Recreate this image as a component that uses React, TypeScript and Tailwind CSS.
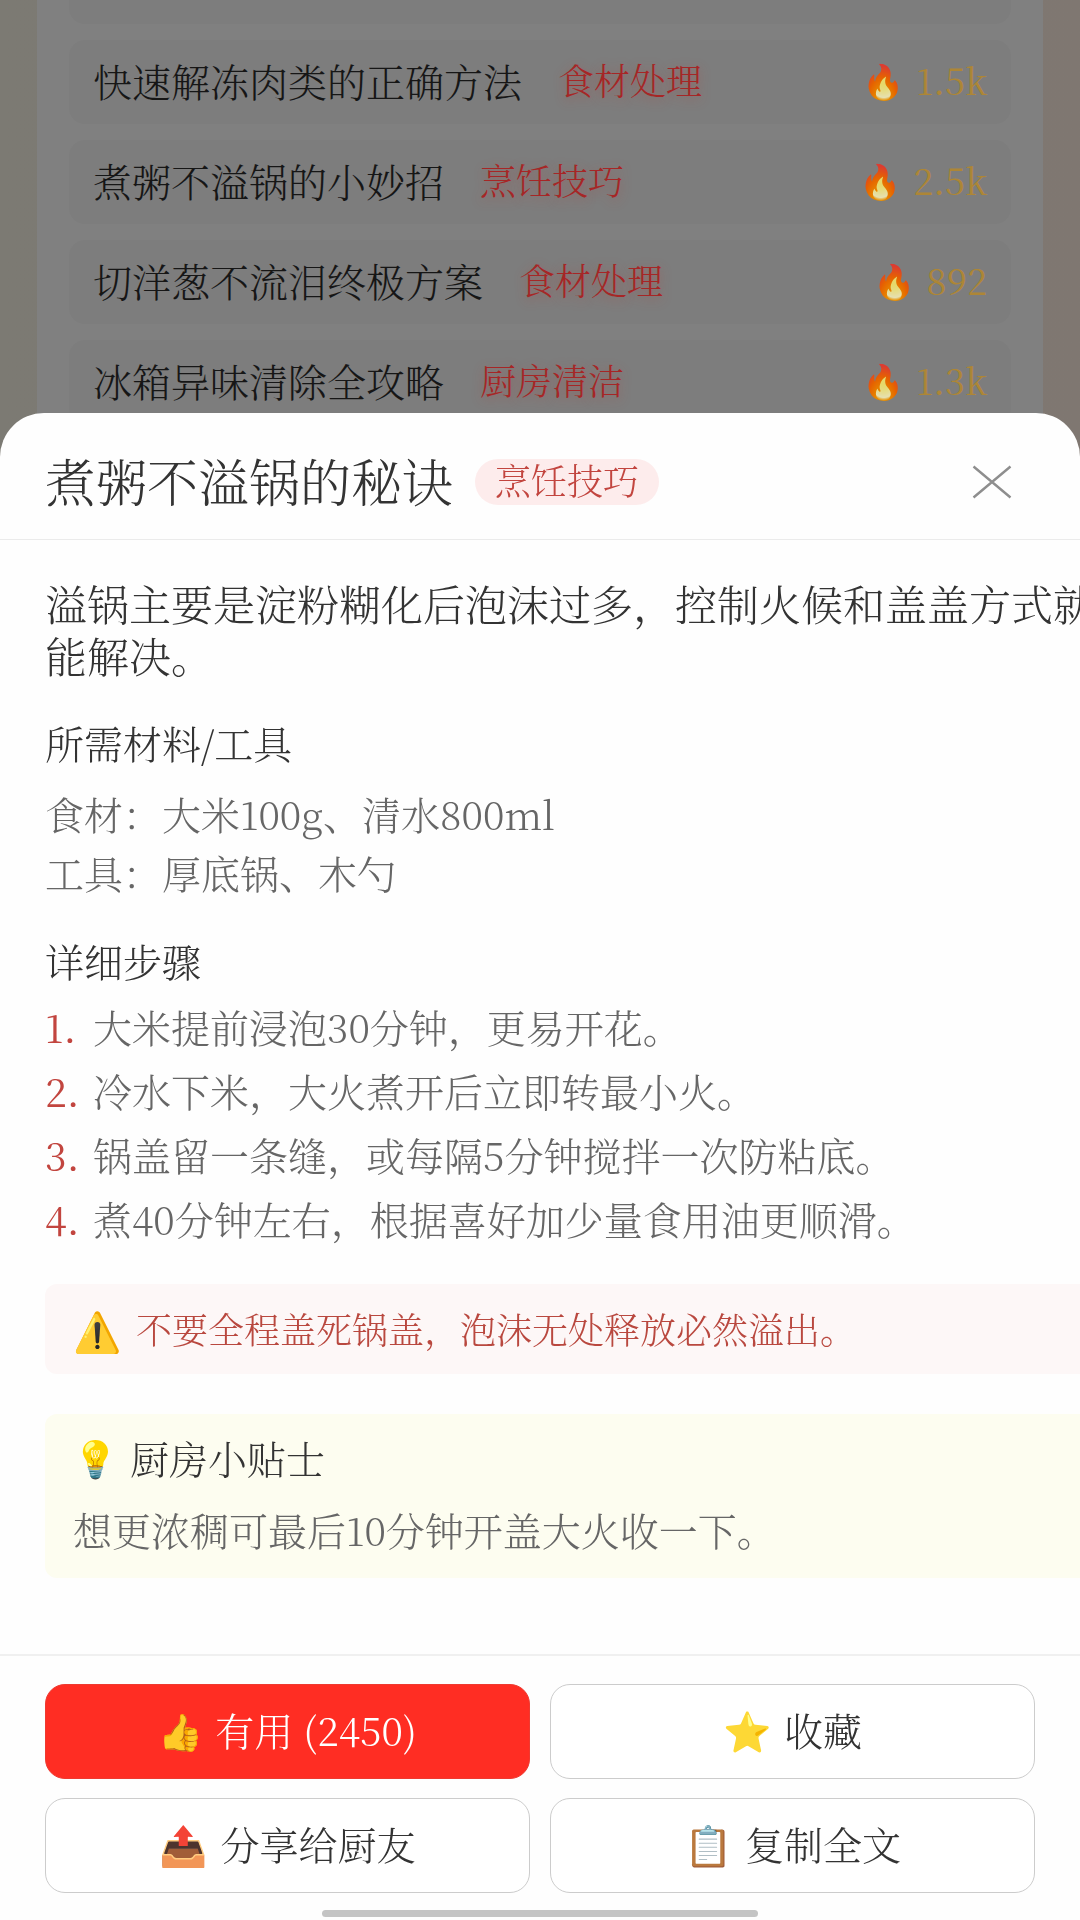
import React from 'react';

const hotTips = [
  { title: '快速解冻肉类的正确方法', tag: '食材处理', heat: '1.5k' },
  { title: '煮粥不溢锅的小妙招', tag: '烹饪技巧', heat: '2.5k' },
  { title: '切洋葱不流泪终极方案', tag: '食材处理', heat: '892' },
  { title: '冰箱异味清除全攻略', tag: '厨房清洁', heat: '1.3k' },
];

const steps = [
  '大米提前浸泡30分钟，更易开花。',
  '冷水下米，大火煮开后立即转最小火。',
  '锅盖留一条缝，或每隔5分钟搅拌一次防粘底。',
  '煮40分钟左右，根据喜好加少量食用油更顺滑。',
];

const actionClass =
  'flex h-[95px] items-center justify-center gap-3 rounded-[20px] border border-[#cccccc] bg-white pb-1 text-[39px] leading-none text-[#333333]';

const HotList = () => (
  <main className="min-h-screen bg-linear-to-r from-[#7c7a73] to-[#7f7771] px-[37px]">
    <div className="flex min-h-screen flex-col gap-4 bg-[#808080] px-8">
      {/* Fila anterior, casi fuera de la vista */}
      <div className="h-6 rounded-b-2xl bg-[#7d7d7d]" />
      {hotTips.map((tip) => (
        <a
          key={tip.title}
          href="#"
          className="flex h-[84px] items-center rounded-2xl bg-[#7d7d7d] px-6 pb-1 text-[39px] leading-none text-[#161616]"
        >
          <span>{tip.title}</span>
          <span className="ml-5 px-4 text-[36px] text-[#a62626] [text-shadow:0_3px_12px_rgba(190,60,50,0.45)]">
            {tip.tag}
          </span>
          <span className="ml-auto flex items-center gap-3 text-[36px] font-normal text-[#ad8636]">
            <span className="text-[34px] brightness-90">🔥</span>
            <span>{tip.heat}</span>
          </span>
        </a>
      ))}
    </div>
  </main>
);

const TipSheet = () => (
  <section
    role="dialog"
    aria-labelledby="tip-title"
    className="fixed inset-x-0 bottom-0 overflow-hidden rounded-t-[44px] bg-[#fefefe]"
  >
    {/* Cabecera */}
    <header className="flex h-[127px] items-center border-b border-[#ebebeb] pt-3 pr-[60px] pl-[45px]">
      <h1 id="tip-title" className="pb-1 text-[51px] leading-none text-[#333333]">
        煮粥不溢锅的秘诀
      </h1>
      <span className="ml-[22px] rounded-full bg-[#fdecec] px-5 pb-1 text-[36px] leading-[42px] text-[#c2453f]">
        烹饪技巧
      </span>
      <button type="button" aria-label="关闭" className="ml-auto flex h-12 w-14 items-center justify-center">
        <svg width="40" height="34" viewBox="0 0 40 34" fill="none" stroke="#8e8e8e" strokeWidth="2.4">
          <path d="M1.5 1.5L38.5 32.5M38.5 1.5L1.5 32.5" />
        </svg>
      </button>
    </header>

    {/* Contenido */}
    <div className="-mr-20 pt-[37px] pr-[60px] pb-[76px] pl-[45px] text-[39px] text-[#666666]">
      <p className="text-[42px] leading-[52px] text-[#333333]">
        溢锅主要是淀粉糊化后泡沫过多，控制火候和盖盖方式就能解决。
      </p>

      <h2 className="mt-[35px] leading-[52px] text-[#333333]">所需材料/工具</h2>
      <div className="mt-4 leading-[59px]">
        <p>食材：大米100g、清水800ml</p>
        <p>工具：厚底锅、木勺</p>
      </div>

      <h2 className="mt-8 leading-[52px] text-[#333333]">详细步骤</h2>
      <ol className="mt-2 leading-[64px]">
        {steps.map((step, i) => (
          <li key={step} className="flex gap-4">
            <span className="w-8 font-normal text-[#c2453f]">{i + 1}.</span>
            <span>{step}</span>
          </li>
        ))}
      </ol>

      <div className="mt-[34px] flex h-[90px] items-center gap-[14px] rounded-xl bg-[#fdf7f7] px-7 text-[36px] text-[#b9483f]">
        <span className="text-[39px]">⚠️</span>
        <span>不要全程盖死锅盖，泡沫无处释放必然溢出。</span>
      </div>

      <div className="mt-10 rounded-xl bg-[#fdfdf0] px-7 pt-[13px] pb-[19px]">
        <h2 className="flex items-center gap-3 leading-[60px] text-[#333333]">
          <span className="text-[36px]">💡</span>
          <span>厨房小贴士</span>
        </h2>
        <p className="mt-3 leading-[60px]">想更浓稠可最后10分钟开盖大火收一下。</p>
      </div>
    </div>

    {/* Acciones */}
    <footer className="border-t-2 border-[#f0f0f0] px-[45px] pt-7">
      <div className="grid grid-cols-2 gap-x-5 gap-y-[19px]">
        <button type="button" className="flex h-[95px] items-center justify-center gap-3 rounded-[20px] border border-[#ee3a30] bg-[#ff2d23] pb-1 text-[39px] leading-none text-white">
          <span className="text-[36px]">👍</span>
          <span>有用 (2450)</span>
        </button>
        <button type="button" className={actionClass}>
          <span>⭐</span>
          <span>收藏</span>
        </button>
        <button type="button" className={actionClass}>
          <span>📤</span>
          <span>分享给厨友</span>
        </button>
        <button type="button" className={actionClass}>
          <span>📋</span>
          <span>复制全文</span>
        </button>
      </div>
      <div className="mx-auto mt-[17px] mb-[3px] h-[7px] w-[44%] rounded-full bg-[#c4c4c4]" />
    </footer>
  </section>
);

const App = () => {
  return (
    <div
      lang="zh-CN"
      className="font-light font-['Noto_Serif_CJK_SC','Noto_Serif','Liberation_Serif',serif]"
    >
      <HotList />
      <TipSheet />
    </div>
  );
};

export default App;
